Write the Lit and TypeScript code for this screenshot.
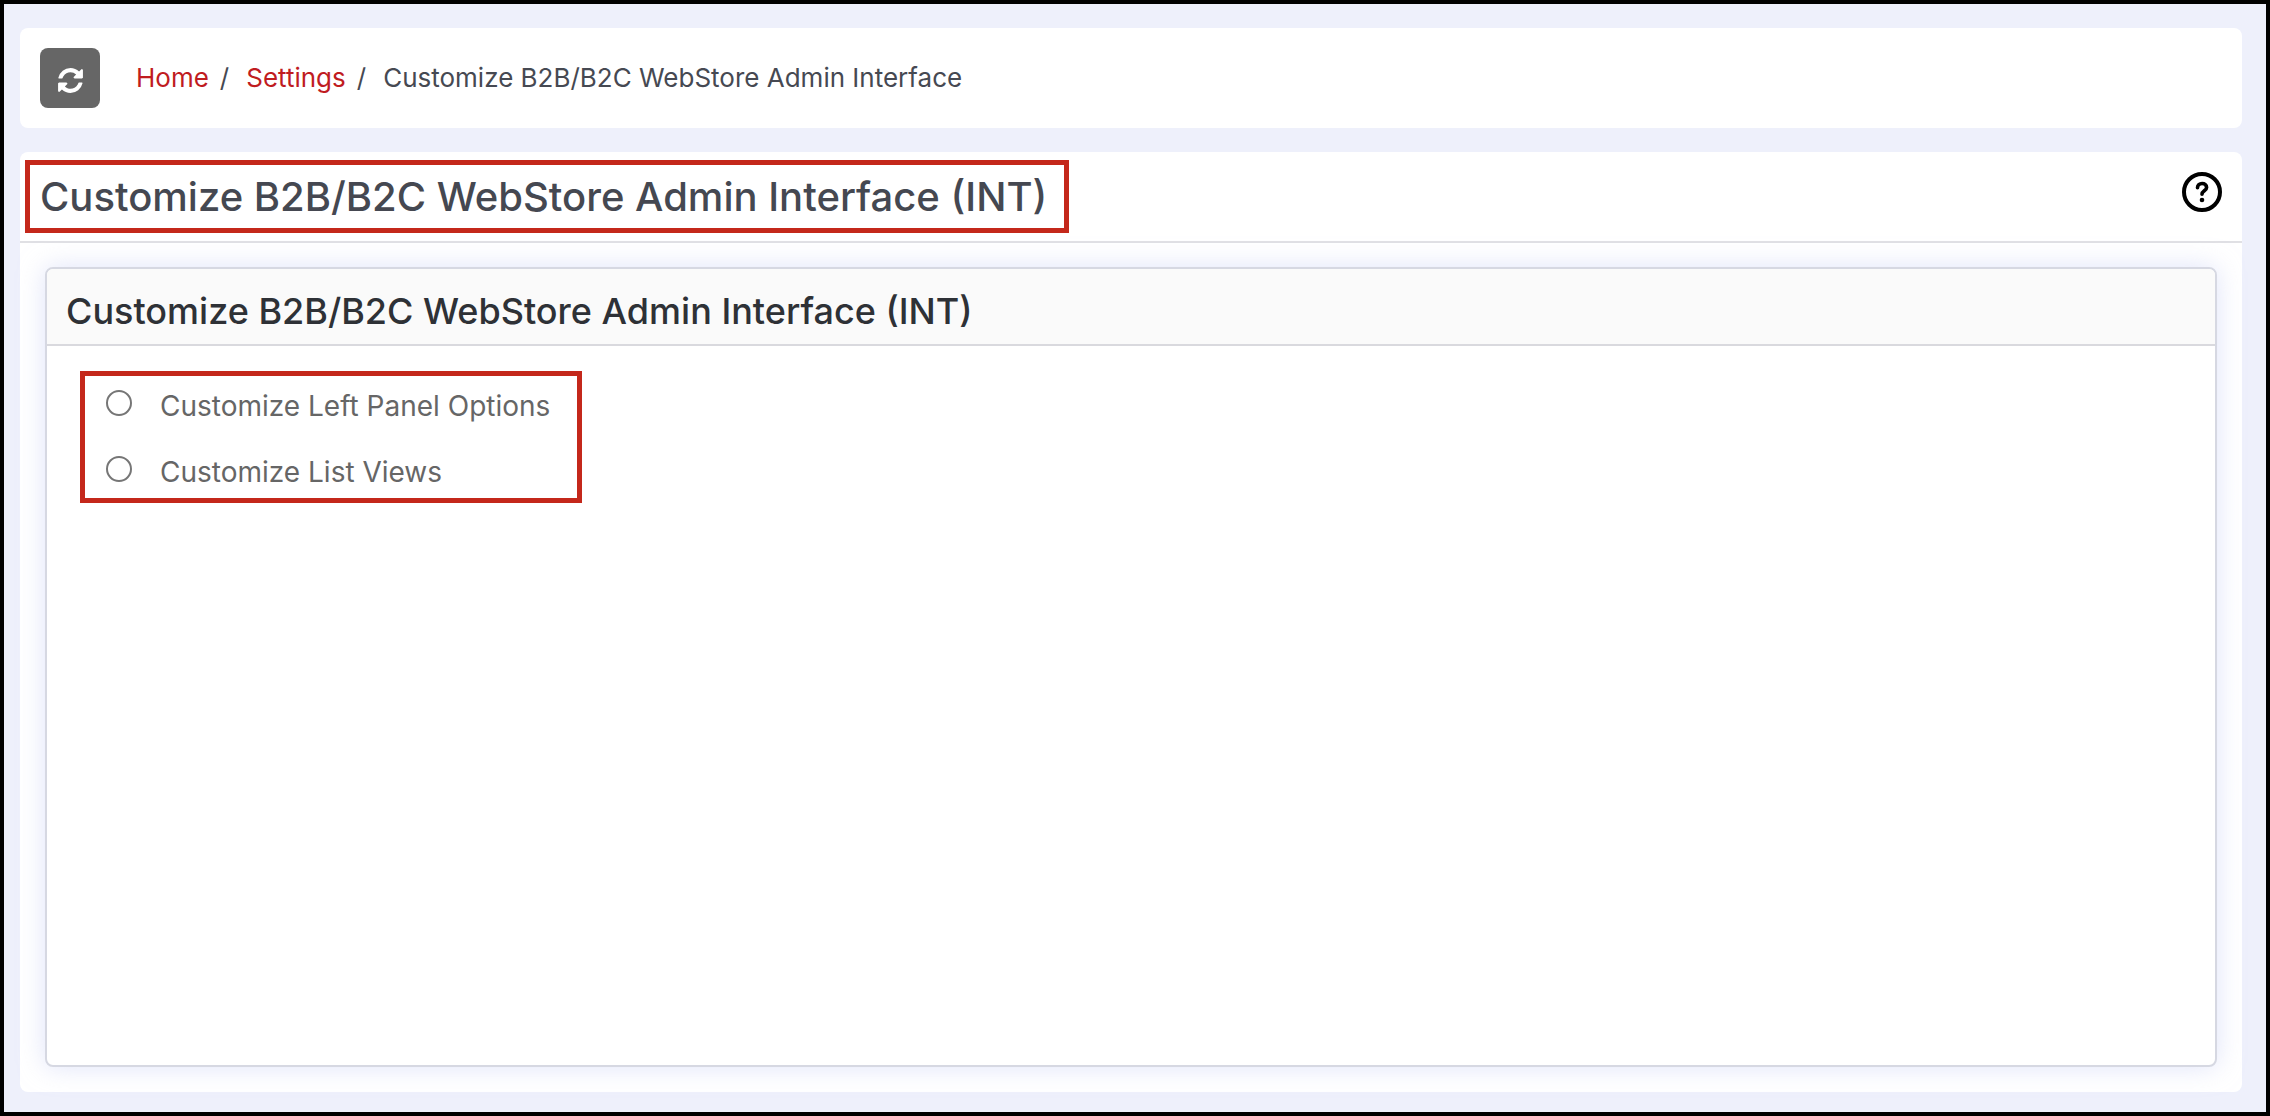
import { LitElement, html, css } from "lit";
import { customElement } from "lit/decorators.js";

@customElement("app-root")
export class AppRoot extends LitElement {
  static styles = css`
    :host {
      display: block;
      box-sizing: border-box;
      width: 2270px;
      height: 1116px;
      border: 4px solid #000;
      background: #eef0fb;
      font-family: Inter, "Liberation Sans", sans-serif;
      padding: 24px 24px 20px 16px;
    }
    .page { display: flex; flex-direction: column; height: 100%; }
    .crumbs {
      height: 100px; box-sizing: border-box; flex: none;
      display: flex; align-items: center;
      background: #fff; border-radius: 8px; padding: 0 20px;
      font-size: 26px; color: #464952;
    }
    .sync {
      width: 60px; height: 60px; flex: none; border-radius: 8px; background: #666;
      display: flex; align-items: center; justify-content: center; margin-right: 36px;
    }
    .sync svg { width: 29px; height: 29px; fill: #fff; display: block; margin-top: 4px; }
    .trail { display: flex; margin-bottom: 2px; }
    .crumbs a { color: #c01c1f; text-decoration: none; }
    .sep { margin: 0 17px 0 11px; }
    .head {
      margin-top: 24px; height: 91px; box-sizing: border-box; flex: none;
      display: flex; align-items: flex-start; justify-content: space-between;
      background: #fff; border-radius: 8px 8px 0 0; border-bottom: 2px solid #e0e0e4;
      padding: 8px 20px 0 5px;
    }
    .mark { border: 5px solid #c4281b; box-sizing: border-box; }
    .title-box { height: 73px; width: 1044px; display: flex; align-items: center; padding-left: 10px; }
    h1 { margin: 0; font-size: 40px; font-weight: 500; color: #454851; white-space: nowrap; }
    .help { width: 40px; height: 40px; margin-top: 12px; display: block; }
    .body {
      flex: 1; margin-top: 0; background: #fff; border-radius: 0 0 8px 8px;
      padding: 24px 25px 25px 25px; display: flex; min-height: 0;
    }
    .card {
      flex: 1; border: 2px solid #d6d8e2; border-radius: 8px; background: #fff;
      box-shadow: 0 0 26px rgba(196, 204, 244, 0.55);
      display: flex; flex-direction: column; overflow: hidden;
    }
    .card-head {
      height: 75px; box-sizing: content-box; flex: none; background: #fafafa;
      border-bottom: 2px solid #d9d9de; display: flex; align-items: center; padding: 0 0 0 19px;
    }
    h2 { margin: 8px 0 0; font-size: 36px; font-weight: 500; color: #2e3136; white-space: nowrap; }
    .options {
      align-self: flex-start; margin: 25px 0 0 33px; width: 502px; height: 132px;
      display: flex; flex-direction: column; gap: 26px; padding: 14px 0 0 21px;
    }
    .opt { display: flex; align-items: flex-start; height: 40px; flex: none; font-size: 28px; color: #666; }
    .radio {
      width: 26px; height: 26px; box-sizing: border-box; flex: none; border-radius: 50%;
      border: 2px solid #767676; background: #fff; margin-right: 28px;
    }
    .opt span { line-height: 32px; }
  `;

  render() {
    return html`<div class="page">
      <div class="crumbs">
        <div class="sync">
          <svg viewBox="0 0 1792 1792"><path d="M1639 1056q0 5-1 7-64 268-268 434.5t-478 166.5q-146 0-282.5-55t-243.5-157l-129 129q-19 19-45 19t-45-19-19-45v-448q0-26 19-45t45-19h448q26 0 45 19t19 45-19 45l-137 137q71 66 161 102t187 36q134 0 250-65t186-179q11-17 53-117 8-23 30-23h192q13 0 22.5 9.5t9.5 22.5zm25-800v448q0 26-19 45t-45 19h-448q-26 0-45-19t-19-45 19-45l138-138q-148-137-349-137-134 0-250 65t-186 179q-11 17-53 117-8 23-30 23h-199q-13 0-22.5-9.5t-9.5-22.5v-7q65-268 270-434.5t480-166.5q146 0 284 55.5t245 156.5l130-129q19-19 45-19t45 19 19 45z"/></svg>
        </div>
        <div class="trail">
          <a>Home</a><span class="sep">/</span><a>Settings</a><span class="sep">/</span><span>Customize B2B/B2C WebStore Admin Interface</span>
        </div>
      </div>
      <div class="head">
        <div class="mark title-box"><h1>Customize B2B/B2C WebStore Admin Interface (INT)</h1></div>
        <svg class="help" viewBox="0 0 40 40" fill="none" stroke="#000" stroke-width="4">
          <circle cx="20" cy="20" r="18"/>
          <path d="M15.5 15.8c0-2.6 2-4.3 4.6-4.3s4.5 1.5 4.5 3.9c0 3.3-4.6 3.4-4.6 6.8" stroke-width="3.6" stroke-linecap="round"/>
          <circle cx="20" cy="28" r="2.3" fill="#000" stroke="none"/>
        </svg>
      </div>
      <div class="body">
        <div class="card">
          <div class="card-head"><h2>Customize B2B/B2C WebStore Admin Interface (INT)</h2></div>
          <div class="mark options">
            <label class="opt"><div class="radio"></div><span>Customize Left Panel Options</span></label>
            <label class="opt"><div class="radio"></div><span>Customize List Views</span></label>
          </div>
        </div>
      </div>
    </div>`;
  }
}
